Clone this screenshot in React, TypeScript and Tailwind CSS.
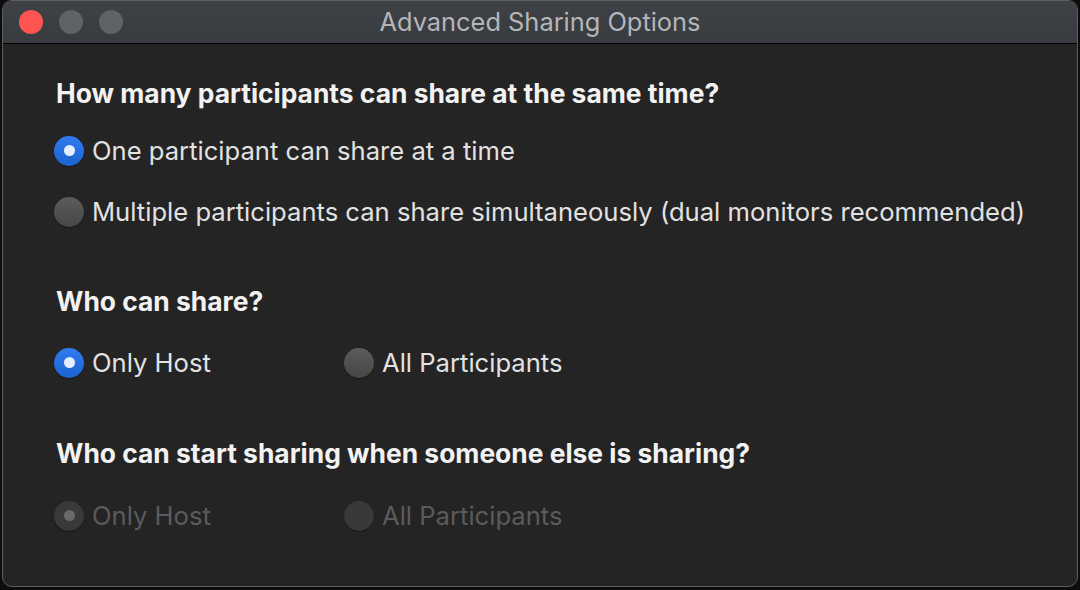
const font = { fontFamily: 'Inter, "Noto Sans", sans-serif' }

type RadioProps = { checked?: boolean; disabled?: boolean; label: string }

const Radio = ({ checked, disabled, label }: RadioProps) => {
    let circle = "bg-gradient-to-b from-[#5c5c5c] to-[#464646]"
    if (checked && !disabled) circle = "bg-gradient-to-b from-[#2f7cf0] to-[#1c62d0]"
    if (disabled) circle = "bg-[#393939]"
    return (
        <div className="flex items-center">
            <div className={"w-[30px] h-[30px] shrink-0 rounded-full flex items-center justify-center shadow-[0_1px_1px_rgba(0,0,0,0.4)] " + circle}>
                {checked && (
                    <div className={"w-[11px] h-[11px] rounded-full " + (disabled ? "bg-[#6a6a6a]" : "bg-[#e6efff]")}></div>
                )}
            </div>
            <span className={"ml-[8px] text-[25.6px] whitespace-nowrap " + (disabled ? "text-[#5b5b5b]" : "text-[#e2e2e2]")}>
                {label}
            </span>
        </div>
    )
}

const Heading = ({ children }: { children: string }) => (
    <div className="h-[30px] leading-[30px] text-[26.4px] font-bold text-[#f2f2f2] pl-[2px] whitespace-nowrap">{children}</div>
)

export default function App() {
    return (
        <div className="w-[1080px] h-[590px] bg-[#0c0c0c] pl-[2px] pr-[2px]" style={font}>
            <div className="w-[1076px] h-[587px] rounded-[10px] border border-[#5e5e5e] bg-[#242424] overflow-hidden flex flex-col">
                <div className="h-[43px] shrink-0 bg-gradient-to-b from-[#3e4145] to-[#383b3f] border-b border-black relative flex items-center justify-center">
                    <div className="absolute left-[16px] top-[9px] flex gap-[16px]">
                        <div className="w-[24px] h-[24px] rounded-full bg-[#fe5552]"></div>
                        <div className="w-[24px] h-[24px] rounded-full bg-[#5f6266]"></div>
                        <div className="w-[24px] h-[24px] rounded-full bg-[#5f6266]"></div>
                    </div>
                    <span className="text-[25.4px] text-[#b4b6b9]">Advanced Sharing Options</span>
                </div>
                <div className="flex flex-col pl-[51px] pt-[34px]">
                    <Heading>How many participants can share at the same time?</Heading>
                    <div className="mt-[23px] h-[40px] flex items-center">
                        <Radio checked label="One participant can share at a time" />
                    </div>
                    <div className="mt-[21px] h-[40px] flex items-center">
                        <Radio label="Multiple participants can share simultaneously (dual monitors recommended)" />
                    </div>
                    <div className="mt-[54px]">
                        <Heading>Who can share?</Heading>
                    </div>
                    <div className="mt-[27px] h-[40px] flex items-center">
                        <div className="w-[290px]">
                            <Radio checked label="Only Host" />
                        </div>
                        <Radio label="All Participants" />
                    </div>
                    <div className="mt-[55px]">
                        <Heading>Who can start sharing when someone else is sharing?</Heading>
                    </div>
                    <div className="mt-[28px] h-[40px] flex items-center">
                        <div className="w-[290px]">
                            <Radio checked disabled label="Only Host" />
                        </div>
                        <Radio disabled label="All Participants" />
                    </div>
                </div>
            </div>
        </div>
    )
}
